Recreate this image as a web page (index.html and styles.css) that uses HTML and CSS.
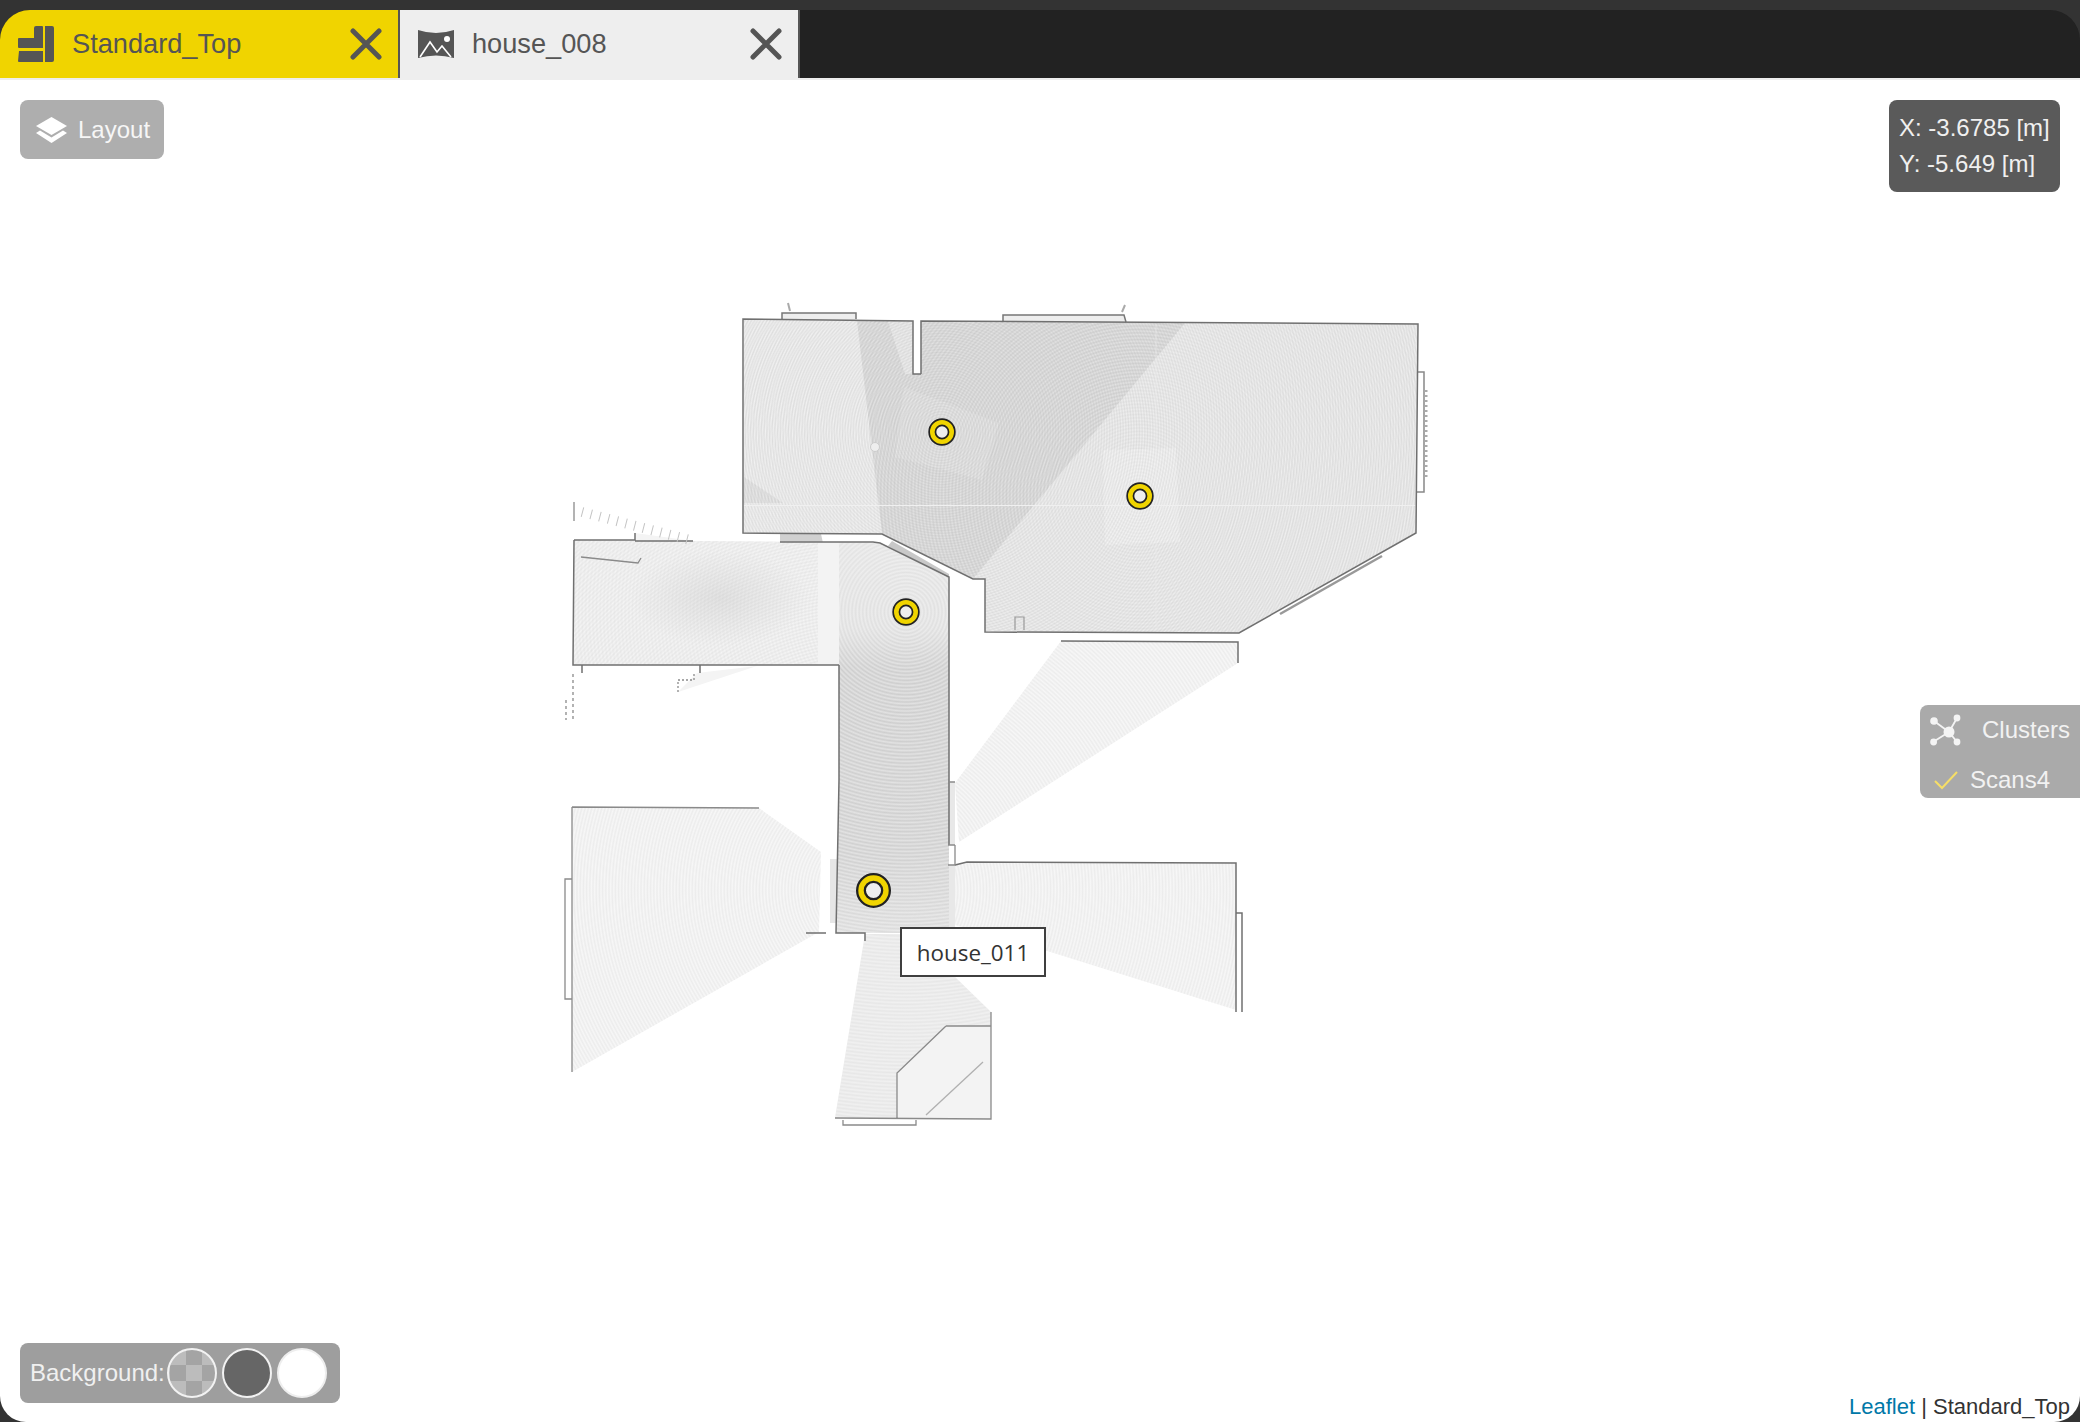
FILE: index.html
```html
<!DOCTYPE html>
<html lang="en">
<head>
	<meta charset="UTF-8">
	<title>Standard_Top</title>
	<link rel="stylesheet" href="styles.css">
</head>
<body>
	<div class="app">
		<div class="tabs">
			<div class="tab active">
				<svg class="tabIcon" width="36" height="36" viewBox="0 0 36 36">
					<path d="M16 2a2 2 0 0 1 2-2h6a1 1 0 0 1 1 1v21H1a1 1 0 0 1-1-1v-8a1 1 0 0 1 1-1h15zM1 25h24v11H1a1 1 0 0 1-1-1zM27 0h7a2 2 0 0 1 2 2v32a2 2 0 0 1-2 2h-7z" fill="#555"/>
				</svg>
				<span class="tabName">Standard_Top</span>
				<svg class="close" width="32" height="32" viewBox="0 0 32 32">
					<path d="M3 3l26 26M29 3L3 29" stroke="#555" stroke-width="5" stroke-linecap="round"/>
				</svg>
			</div>
			<div class="tab">
				<svg class="tabIcon" width="36" height="36" viewBox="0 0 36 36">
					<path d="M0 4q18 6 36 0v28q-18-5-36 0z" fill="#555"/>
					<circle cx="29" cy="13" r="3" fill="#fff"/>
					<path d="M2 31l10-15 7 10 5-6 9 11" fill="none" stroke="#fff" stroke-width="1.6"/>
				</svg>
				<span class="tabName">house_008</span>
				<svg class="close" width="32" height="32" viewBox="0 0 32 32">
					<path d="M3 3l26 26M29 3L3 29" stroke="#555" stroke-width="5" stroke-linecap="round"/>
				</svg>
			</div>
		</div>

		<div class="map">
			<svg class="plan" width="2080" height="1342" viewBox="0 80 2080 1342">
				<defs>
					<radialGradient id="arcsA" gradientUnits="userSpaceOnUse" cx="1139" cy="496" r="3.4" spreadMethod="repeat">
						<stop offset="0" stop-color="#fff" stop-opacity="0"/>
						<stop offset=".5" stop-color="#fff" stop-opacity=".35"/>
						<stop offset="1" stop-color="#fff" stop-opacity="0"/>
					</radialGradient>
					<radialGradient id="arcsB" gradientUnits="userSpaceOnUse" cx="941" cy="432" r="2.7" spreadMethod="repeat">
						<stop offset="0" stop-color="#aaa" stop-opacity="0"/>
						<stop offset=".5" stop-color="#aaa" stop-opacity=".2"/>
						<stop offset="1" stop-color="#aaa" stop-opacity="0"/>
					</radialGradient>
					<radialGradient id="arcsC" gradientUnits="userSpaceOnUse" cx="906" cy="612" r="3.6" spreadMethod="repeat">
						<stop offset="0" stop-color="#fff" stop-opacity="0"/>
						<stop offset=".5" stop-color="#fff" stop-opacity=".4"/>
						<stop offset="1" stop-color="#fff" stop-opacity="0"/>
					</radialGradient>
					<radialGradient id="arcsD" gradientUnits="userSpaceOnUse" cx="873" cy="890" r="3.2" spreadMethod="repeat">
						<stop offset="0" stop-color="#bbb" stop-opacity="0"/>
						<stop offset=".5" stop-color="#bbb" stop-opacity=".18"/>
						<stop offset="1" stop-color="#bbb" stop-opacity="0"/>
					</radialGradient>
					<linearGradient id="corridor" x1="0" y1="0" x2="0" y2="1">
						<stop offset="0" stop-color="#e4e4e4"/>
						<stop offset=".22" stop-color="#e0e0e0"/>
						<stop offset=".32" stop-color="#cecece"/>
						<stop offset=".8" stop-color="#d0d0d0"/>
						<stop offset="1" stop-color="#dcdcdc"/>
					</linearGradient>
					<radialGradient id="blob">
						<stop offset="0" stop-color="#bbb" stop-opacity=".3"/>
						<stop offset="1" stop-color="#bbb" stop-opacity="0"/>
					</radialGradient>
				</defs>

				<!-- scan fans outside the rooms -->
				<g fill="#f7f7f7">
					<path d="M1061 641L1238 642V663L959 842L955 783z"/>
					<path d="M955 865L967 862L1236 863V1010L1044 950L955 925z"/>
					<path d="M572 807L759 808L821 852L819 932L572 1072z"/>
				</g>
				<path d="M1061 641L1238 642V663L959 842L955 783zM955 865L967 862L1236 863V1010L1044 950L955 925zM572 807L759 808L821 852L819 932L572 1072z" fill="url(#arcsD)"/>
				<path d="M635 533L700 542H635zM697 673L757 666L678 692z" fill="#f4f4f4"/>
				<path d="M830 859H837V923H830z" fill="#e6e6e6"/>
				<path d="M948 782H955V845H948zM948 865H955V927H948z" fill="#e8e8e8"/>
				<path d="M780 533L821 534L823 543H780z" fill="#d0d0d0"/>

				<!-- top room -->
				<path d="M744 319L913 321V374H921V321L1418 324L1416 533L1239 633L985 632V579H973L882 534L743 533z" fill="#e7e7e7"/>
				<path d="M744 319H857L884 534H743z" fill="#eaeaea"/>
				<path d="M857 321H913V374H921V321L1185 323L973 579L882 534z" fill="#d4d4d4"/>
				<path d="M888 321H913V374H905z" fill="#e4e4e4"/>
				<path d="M904 387L999 423L982 480L895 457z" fill="#dadada"/>
				<path d="M1103 450L1176 448L1180 542L1105 545z" fill="#ededed"/>
				<path d="M744 477L783 503H744z" fill="#dcdcdc"/>
				<path d="M744 319L913 321V374H921V321L1418 324L1416 533L1239 633L985 632V579H973L882 534L743 533z" fill="url(#arcsA)"/>
				<path d="M744 319L913 321V374H921V321L1418 324L1416 533L1239 633L985 632V579H973L882 534L743 533z" fill="url(#arcsB)"/>
				<path d="M743 505.5H1416" stroke="#f0f0f0" stroke-width="1"/>
				<path d="M1156 324V632" stroke="#ececec" stroke-width="1" opacity=".6"/>
				<path d="M782 319V313H856V319M1003 321V315H1124L1126 322" fill="#eee" stroke="#777" stroke-width="1.5"/>
				<path d="M1418 372H1424V492H1417" fill="none" stroke="#888" stroke-width="1.5"/>
				<path d="M1426 390V480" stroke="#aaa" stroke-width="3" stroke-dasharray="2 3"/>
				<path d="M1015 630V617H1024V630" fill="none" stroke="#999" stroke-width="1.2"/>
				<path d="M1280 614L1382 556" stroke="#999" stroke-width="2.5"/>
				<path d="M788 303l2 8M1122 312l3-7" stroke="#aaa" stroke-width="2"/>
				<circle cx="875" cy="447" r="4.5" fill="#eee" stroke="#ccc"/>

				<!-- left room and corridor -->
				<path d="M574 540L839 542V665L573 665z" fill="#efefef"/>
				<path d="M574 540L839 542V665L573 665z" fill="url(#arcsC)"/>
				<path d="M574 540L839 542V665L573 665z" fill="url(#arcsD)"/>
				<ellipse cx="720" cy="598" rx="90" ry="48" fill="url(#blob)"/>
				<path d="M818 542H839V665H818z" fill="#f3f3f3"/>
				<path d="M839 542L880 543L949 577V933H836L839 780z" fill="url(#corridor)"/>
				<path d="M839 542L880 543L949 577V933H836L839 780z" fill="url(#arcsC)"/>
				<path d="M892 541L949 574V578L888 546z" fill="#c8c8c8"/>

				<!-- bottom room -->
				<path d="M865 934H955V977L991 1012V1119L835 1118z" fill="#e7e7e7"/>
				<path d="M865 934H955V977L991 1012V1119L835 1118z" fill="url(#arcsC)"/>
				<path d="M897 1073L946 1026H991V1119H897z" fill="#f3f3f3"/>

				<!-- walls -->
				<g fill="none" stroke="#707070" stroke-width="1.5">
					<path d="M921 374V321L1418 324L1416 533L1239 633L985 632V579H973L882 534L743 533V319L913 321V374H921"/>
					<path d="M574 540H635V533M635 541H693M780 542L873 542L880 543L949 577V780"/>
					<path d="M574 540L573 665H839M573 665H582V673M700 665V673M839 665V780L836 933H865V941M806 933H826"/>
					<path d="M949 780V845M955 865L967 862L1236 863V1012"/>
					<path d="M1236 913H1242V1012"/>
					<path d="M1061 641L1238 642V663"/>
				</g>
				<g fill="none" stroke="#8a8a8a" stroke-width="1.3">
					<path d="M572 807L759 808M572 807V1072M572 879H565V999H572"/>
					<path d="M946 1026L897 1073V1119M946 1026H991M991 1012V1119L835 1118M843 1120V1125H916V1120"/>
					<path d="M983 1062L926 1115" stroke="#b0b0b0"/>
					<path d="M574 502V521"/>
					<path d="M573 674V720M566 700V720" stroke-dasharray="3 3"/>
					<path d="M581 557L638 563L641 558"/>
					<path d="M678 692V680H694V673" stroke-dasharray="2 2"/>
					<path d="M955 782H948M948 845H955M955 845V865H948"/>
				</g>
				<path d="M582 512L690 540" stroke="#c4c4c4" stroke-width="10" stroke-dasharray="1 8"/>

				<!-- scan positions -->
				<g class="ringBack">
					<circle cx="942" cy="432" r="9.7"/>
					<circle cx="1140" cy="496" r="9.7"/>
					<circle cx="906" cy="612" r="9.7"/>
					<circle class="ringBig" cx="873.5" cy="890.5" r="12.5"/>
				</g>
				<g class="ringFront">
					<circle cx="942" cy="432" r="9.7"/>
					<circle cx="1140" cy="496" r="9.7"/>
					<circle cx="906" cy="612" r="9.7"/>
					<circle class="ringBig" cx="873.5" cy="890.5" r="12.5"/>
				</g>
			</svg>

			<div class="tooltip">house_011</div>

			<div class="btn layoutBtn">
				<svg width="31" height="26" viewBox="0 0 31 26">
					<path d="M15.5 0L31 9L15.5 18L0 9z" fill="#fff"/>
					<path d="M4 13.5L15.5 20.5L27 13.5L31 16L15.5 26L0 16z" fill="#fff"/>
				</svg>
				<span>Layout</span>
			</div>

			<div class="coords">
				<div>X: -3.6785 [m]</div>
				<div>Y: -5.649 [m]</div>
			</div>

			<div class="clusters">
				<div class="clusterHead">
					<svg width="32" height="32" viewBox="0 0 32 32">
						<path d="M4 7L19 18M27 4L19 18M3 28L19 18M27 28L19 18" stroke="#f4f4f4" stroke-width="1.8"/>
						<circle cx="19" cy="18" r="5.5" fill="#f4f4f4"/>
						<circle cx="4" cy="7" r="3.8" fill="#f4f4f4"/>
						<circle cx="27" cy="4" r="3.4" fill="#f4f4f4"/>
						<circle cx="3.6" cy="28" r="3.4" fill="#f4f4f4"/>
						<circle cx="27" cy="28" r="3.4" fill="#f4f4f4"/>
					</svg>
					<span>Clusters</span>
				</div>
				<div class="clusterItem">
					<svg width="24" height="20" viewBox="0 0 24 20">
						<path d="M1 11l7 7L23 2" fill="none" stroke="#f6de66" stroke-width="2"/>
					</svg>
					<span>Scans4</span>
				</div>
			</div>

			<div class="background">
				<span>Background:</span>
				<i class="swatch checker"></i>
				<i class="swatch dark"></i>
				<i class="swatch white"></i>
			</div>

			<div class="attribution"><a href="#">Leaflet</a> | Standard_Top</div>
		</div>
	</div>
</body>
</html>
```

FILE: styles.css
```css
html, body{
	margin: 0;
	height: 100%;
	background: #333;
	overflow: hidden;
}

body{
	font-family: "Liberation Sans", Arial, sans-serif;
}

.app{
	display: flex;
	flex-direction: column;
	height: 1422px;
	padding-top: 10px;
	box-sizing: border-box;
}

.tabs{
	display: flex;
	flex: none;
	height: 70px;
	box-sizing: border-box;
	background: #222;
	border-radius: 30px 30px 0 0;
	border-bottom: 2px solid #eee;
	overflow: hidden;
}

.tab{
	display: flex;
	align-items: center;
	width: 400px;
	padding: 0 16px 0 18px;
	box-sizing: border-box;
	border-right: 2px solid #555;
	background: #eee;
	color: #555;
	font-size: 27.2px;
}

.tab.active{
	background: #f0d400;
}

.tabIcon{
	flex: none;
	margin-right: 18px;
}

.tabName{
	flex: 1;
}

.close{
	flex: none;
}

.map{
	position: relative;
	flex: 1;
	background: #fff;
	border-radius: 0 0 26px 26px;
}

.plan{
	position: absolute;
	left: 0;
	top: 0;
}

.ringBack circle{
	fill: #eee;
	stroke: #222;
	stroke-width: 8;
}

.ringFront circle{
	fill: none;
	stroke: #f0d400;
	stroke-width: 4.6;
}

.ringBack .ringBig{
	stroke-width: 10;
}

.ringFront .ringBig{
	stroke-width: 5.4;
}

.tooltip{
	position: absolute;
	left: 900px;
	top: 847px;
	width: 146px;
	height: 50px;
	box-sizing: border-box;
	border: 2px solid #3f3f3f;
	background: #fff;
	color: #333;
	font: 22.4px/47px "Open Sans", sans-serif;
	text-align: center;
}

.btn{
	position: absolute;
	left: 20px;
	top: 20px;
	display: flex;
	align-items: center;
	gap: 11px;
	width: 144px;
	height: 59px;
	padding-left: 16px;
	box-sizing: border-box;
	border-radius: 8px;
	background: #aeaeae;
	color: #f6f6f6;
	font-size: 24px;
}

.coords{
	position: absolute;
	right: 20px;
	top: 20px;
	width: 171px;
	height: 92px;
	padding: 10px;
	box-sizing: border-box;
	border-radius: 8px;
	background: #5a5a5a;
	color: #f0f0f0;
	font-size: 24px;
	line-height: 36px;
}

.clusters{
	position: absolute;
	right: 0;
	top: 625px;
	width: 160px;
	height: 93px;
	padding-left: 10px;
	box-sizing: border-box;
	border-radius: 8px 0 0 8px;
	background: #aaa;
	color: #f2f2f2;
	font-size: 24px;
}

.clusterHead{
	display: flex;
	align-items: center;
	gap: 20px;
	height: 50px;
}

.clusterItem{
	display: flex;
	align-items: center;
	gap: 12px;
	height: 36px;
	padding-left: 4px;
	margin-top: 7px;
}

.background{
	position: absolute;
	left: 20px;
	bottom: 19px;
	display: flex;
	align-items: center;
	gap: 5px;
	width: 320px;
	height: 60px;
	padding-left: 10px;
	box-sizing: border-box;
	border-radius: 8px;
	background: #9e9e9e;
	color: #f0f0f0;
	font-size: 24px;
}

.background span{
	margin-right: -3px;
}

.swatch{
	display: block;
	width: 50px;
	height: 50px;
	box-sizing: border-box;
	border: 2px solid #f2f2f2;
	border-radius: 50%;
}

.checker{
	background: conic-gradient(#bcbcbc 25%, #a4a4a4 0 50%, #bcbcbc 0 75%, #a4a4a4 0) 1px 15px / 32px 32px;
}

.dark{
	background: #666;
}

.white{
	background: #fff;
	border-color: #eee;
}

.attribution{
	position: absolute;
	right: 10px;
	bottom: 2px;
	color: #333;
	font-size: 22px;
	line-height: 26px;
}

.attribution a{
	color: #0078a8;
	text-decoration: none;
}
```
